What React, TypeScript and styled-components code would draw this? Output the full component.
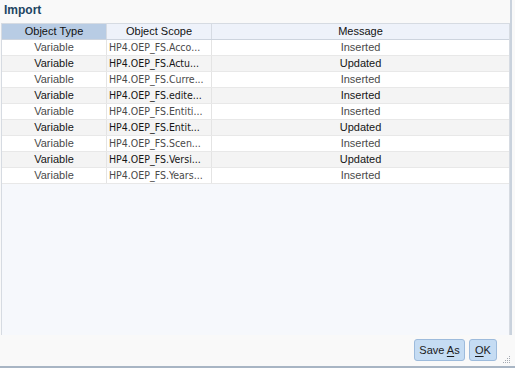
import styled, { createGlobalStyle } from 'styled-components';

type ImportRow = {
  objectType: string;
  objectScope: string;
  message: string;
};

const rows: ImportRow[] = [
  { objectType: 'Variable', objectScope: 'HP4.OEP_FS.Acco...', message: 'Inserted' },
  { objectType: 'Variable', objectScope: 'HP4.OEP_FS.Actu...', message: 'Updated' },
  { objectType: 'Variable', objectScope: 'HP4.OEP_FS.Curre...', message: 'Inserted' },
  { objectType: 'Variable', objectScope: 'HP4.OEP_FS.edite...', message: 'Inserted' },
  { objectType: 'Variable', objectScope: 'HP4.OEP_FS.Entiti...', message: 'Inserted' },
  { objectType: 'Variable', objectScope: 'HP4.OEP_FS.Entit...', message: 'Updated' },
  { objectType: 'Variable', objectScope: 'HP4.OEP_FS.Scen...', message: 'Inserted' },
  { objectType: 'Variable', objectScope: 'HP4.OEP_FS.Versi...', message: 'Updated' },
  { objectType: 'Variable', objectScope: 'HP4.OEP_FS.Years...', message: 'Inserted' },
];

export default function App() {
  return (
    <>
      <GlobalStyle />
      <Dialog>
        <Content>
          <Title>Import</Title>
          <TableBox>
            <HeaderRow>
              <HeaderCell $sorted>Object Type</HeaderCell>
              <HeaderCell>Object Scope</HeaderCell>
              <HeaderCell>Message</HeaderCell>
            </HeaderRow>
            {rows.map((item, idx) => (
              <Row key={idx} $alt={idx % 2 === 1}>
                <Cell>{item.objectType}</Cell>
                <ScopeCell>{item.objectScope}</ScopeCell>
                <Cell>{item.message}</Cell>
              </Row>
            ))}
          </TableBox>
        </Content>
        <Footer>
          <Button>
            Save <u>A</u>s
          </Button>
          <Button $narrow>
            <u>O</u>K
          </Button>
          <Grip>
            <svg width="8" height="8" viewBox="0 0 8 8">
              {[
                [6, 0],
                [6, 2],
                [4, 2],
                [6, 4],
                [4, 4],
                [2, 4],
                [6, 6],
                [4, 6],
                [2, 6],
                [0, 6],
              ].map(([x, y]) => (
                <rect key={`${x}-${y}`} x={x} y={y} width="1" height="1" fill="#a3a9b1" />
              ))}
            </svg>
          </Grip>
        </Footer>
      </Dialog>
    </>
  );
}

const GlobalStyle = createGlobalStyle`
  html, body {
    margin: 0;
    padding: 0;
    background: #f9f9f9;
  }
  body {
    font-family: "Liberation Sans", Arial, sans-serif;
    font-size: 11px;
  }
`;

const Dialog = styled.div`
  width: 515px;
  height: 368px;
  display: flex;
  flex-direction: column;
  box-sizing: border-box;
  border-bottom: 2px solid #a8b5c4;
  background: #f9f9f9;
`;

const Content = styled.div`
  width: 512px;
  height: 335px;
  box-sizing: border-box;
  border-right: 2px solid #c9d2dd;
  display: flex;
  flex-direction: column;
`;

const Title = styled.div`
  height: 23px;
  box-sizing: border-box;
  padding: 3px 0 0 4px;
  font-weight: bold;
  font-size: 12px;
  color: #1d4563;
`;

const TableBox = styled.div`
  flex: 1;
  margin-left: 1px;
  width: 509px;
  box-sizing: border-box;
  border: 1px solid #d6dbe2;
  border-bottom: none;
  background: #f6f8fc;
`;

const HeaderRow = styled.div`
  display: grid;
  grid-template-columns: 105px 105px 1fr;
  height: 15px;
  border-bottom: 1px solid #cdd4de;
`;

const HeaderCell = styled.div<{ $sorted?: boolean }>`
  display: flex;
  align-items: center;
  justify-content: center;
  border-right: 1px solid #d6dbe3;
  background: ${(p) => (p.$sorted ? '#b8cce4' : '#eef2fa')};
  color: #111;
  line-height: 15px;

  &:last-child {
    border-right: none;
  }
`;

const Row = styled.div<{ $alt: boolean }>`
  display: grid;
  grid-template-columns: 105px 105px 1fr;
  height: 15px;
  border-bottom: 1px solid #e8e8e8;
  background: ${(p) => (p.$alt ? '#f4f4f4' : '#ffffff')};
  color: ${(p) => (p.$alt ? '#161616' : '#4a4a4a')};
`;

const Cell = styled.div`
  display: flex;
  align-items: center;
  justify-content: center;
  border-right: 1px solid #e4e4e4;
  white-space: nowrap;
  overflow: hidden;
  line-height: 15px;

  &:last-child {
    border-right: none;
  }
`;

const ScopeCell = styled(Cell)`
  justify-content: flex-start;
  padding-left: 2px;
  font-family: "Liberation Sans Narrow", "DejaVu Sans Condensed", "Liberation Sans", sans-serif;
  font-size: 10.5px;
`;

const Footer = styled.div`
  flex: 1;
  display: flex;
  align-items: flex-start;
  justify-content: flex-end;
  gap: 4px;
  padding: 4px 18px 0 0;
  position: relative;
`;

const Button = styled.button<{ $narrow?: boolean }>`
  height: 22px;
  width: ${(p) => (p.$narrow ? '28px' : '51px')};
  padding: 0;
  box-sizing: border-box;
  border: 1px solid #9dbbdc;
  border-radius: 3px;
  background: #c5dcf3;
  font-family: "Liberation Sans", Arial, sans-serif;
  font-size: 11px;
  color: #1a1a1a;

  u {
    text-decoration-thickness: 1px;
    text-underline-offset: 2px;
  }
`;

const Grip = styled.div`
  position: absolute;
  right: 4px;
  bottom: 2px;
  width: 8px;
  height: 8px;
  display: flex;
`;
